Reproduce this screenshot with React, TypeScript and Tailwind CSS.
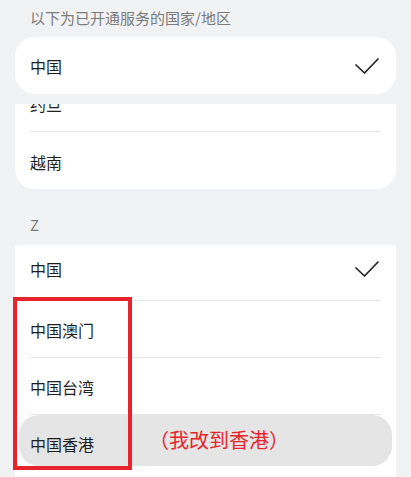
import React from 'react'

const font = { fontFamily: '"Noto Sans CJK SC", "Noto Sans", sans-serif' }

function Check() {
  return (
    <svg width="24" height="16" viewBox="0 0 24 16" fill="none" className="shrink-0">
      <polyline points="1,7 9.5,15 23,1" stroke="#222" strokeWidth="1.7" strokeLinecap="round" strokeLinejoin="round" />
    </svg>
  )
}

function Row({ label, last = false }: { label: string; last?: boolean }) {
  return (
    <div className="px-[15px]">
      <div className={`flex h-[57px] items-center pt-[2px] text-[16px] text-[#1f1f1f] ${last ? '' : 'border-b border-[#e6e6e6]'}`}>
        {label}
      </div>
    </div>
  )
}

export default function App() {
  return (
    <div style={font} className="relative flex h-[477px] w-[411px] flex-col overflow-hidden bg-[#f1f2f4]">
      <p className="pl-[30px] pt-[8px] text-[15px] leading-[20px] text-[#7b7b7b]">以下为已开通服务的国家/地区</p>

      {/* selected, pinned on top */}
      <div className="mx-[15px] mt-[9px] flex h-[57px] items-center justify-between rounded-[20px] bg-white pl-[15px] pr-[17px] text-[16px] text-[#1f1f1f]">
        <span className="pt-[1px]">中国</span>
        <Check />
      </div>

      {/* list scrolled under it */}
      <div className="mx-[15px] mt-[10px] h-[85px] overflow-hidden rounded-b-[20px] bg-white">
        <div className="-mt-[29px]">
          <Row label="约旦" />
          <Row label="越南" last />
        </div>
      </div>

      <p className="pb-[10px] pl-[30px] pt-[26px] text-[15px] leading-[20px] text-[#7b7b7b]">Z</p>

      <div className="mx-[15px] flex flex-1 flex-col rounded-t-[3px] bg-white">
        <div className="px-[15px]">
          <div className="flex h-[56px] items-center justify-between border-b border-[#e6e6e6] pb-[8px] pr-[2px] text-[16px] text-[#1f1f1f]">
            <span>中国</span>
            <Check />
          </div>
        </div>
        <Row label="中国澳门" />
        <Row label="中国台湾" />
        <div className="mx-[4px] flex h-[51px] items-center rounded-[20px] bg-[#e5e5e5] pl-[11px] pt-[6px] text-[16px] text-[#1f1f1f]">
          <span>中国香港</span>
          <span className="ml-[55px] -mt-[8px] text-[20px] text-[#e5242b]">（我改到香港）</span>
        </div>
      </div>

      {/* annotation box */}
      <div className="absolute left-[13px] top-[297px] h-[173px] w-[119px] border-4 border-[#e8232b]" />
    </div>
  )
}
